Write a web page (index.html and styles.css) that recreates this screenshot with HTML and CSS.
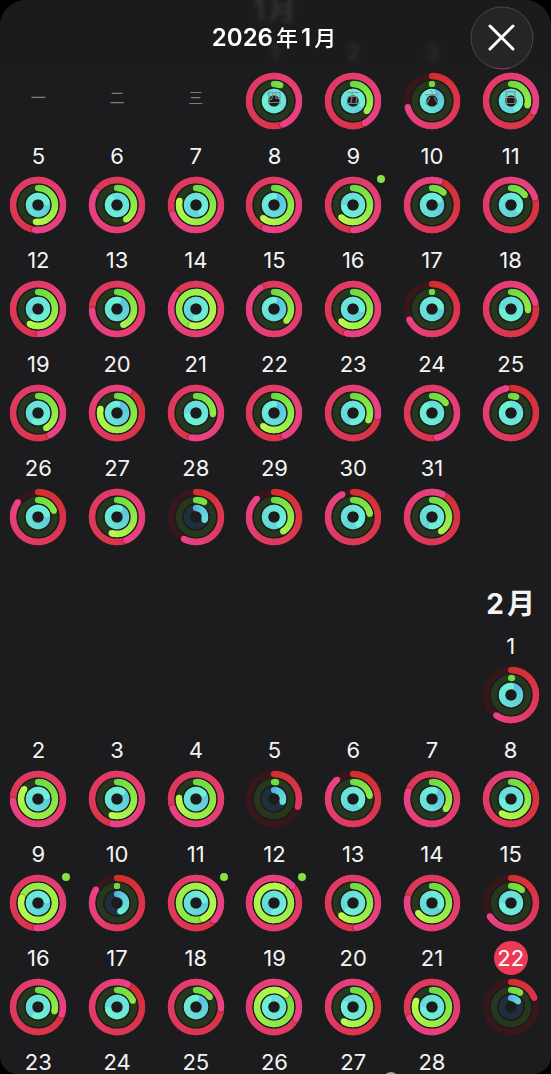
FILE: index.html
```html
<!DOCTYPE html>
<html lang="zh-CN">
<head>
  <meta charset="UTF-8">
  <meta name="viewport" content="width=device-width, initial-scale=1">
  <title>2026年1月</title>
  <link rel="stylesheet" href="styles.css">
</head>
<body>

<div class="screen">
  <main class="calendar">
    <section class="month">
      <h2 class="month-name first-thu"><span>1</span><span>月</span></h2>
      <ol class="days" id="january"></ol>
    </section>
    <section class="month">
      <h2 class="month-name first-sun"><span>2</span><span>月</span></h2>
      <ol class="days" id="february"></ol>
    </section>
  </main>

  <header class="topbar">
    <h1>2026<span class="cjk">年</span>1<span class="cjk">月</span></h1>
    <button class="close" type="button" aria-label="关闭">
      <svg viewBox="0 0 64 64" fill="none" stroke-linecap="round">
        <circle cx="32" cy="32" r="31" fill="#252528" stroke="#48484b"/>
        <path d="M25 62a31 31 0 0 0 15 0" stroke="#8f3652"/>
        <path d="M20 20l23 23M43 20l-23 23" stroke="#fff" stroke-width="3"/>
      </svg>
    </button>
  </header>

  <div class="weekdays">
    <span>一</span><span>二</span><span>三</span><span>四</span><span>五</span><span>六</span><span>日</span>
  </div>

  <div class="nub"></div>
</div>

<script src="script.js"></script>
</body>
</html>
```
FILE: styles.css
```css
* {
  box-sizing: border-box;
}
body {
  margin: 0;
  background-color: #000;
  color: #f4f4f5;
  font-family: Inter, "Noto Sans CJK SC", sans-serif;
}
.screen {
  position: relative;
  height: 100vh;
  overflow: hidden;
  background-color: #1c1c1e;
  border-radius: 26px 26px 18px 18px;
}
.calendar {
  margin: -14px 0 0 -1px;
  padding-right: 1px;
}
.month {
  padding-bottom: 24px;
}
.days,
.weekdays {
  display: grid;
  grid-template-columns: repeat(7, 1fr);
  margin: 0;
  padding: 0;
  text-align: center;
}
.month-name {
  display: flex;
  justify-content: center;
  gap: 3px;
  height: 50px;
  width: calc(100% / 7);
  margin: 0;
  font-size: 28px;
  line-height: 48px;
  font-weight: 700;
}
.first-thu {
  margin-left: calc(300% / 7);
}
.first-sun {
  margin-left: calc(600% / 7);
}
.days {
  list-style: none;
}
.day {
  display: flex;
  flex-direction: column;
  align-items: center;
  gap: 5px;
  height: 104px;
}
.number {
  min-width: 34px;
  height: 32px;
  font-size: 22px;
  line-height: 32px;
  text-align: center;
}
.today .number {
  height: 34px;
  margin: -1px 0;
  line-height: 34px;
  border-radius: 50%;
  background-color: #ec3a56;
  color: #fff;
}
.rings {
  position: relative;
  width: 56px;
  height: 56px;
}
.rings svg {
  display: block;
}
.workout {
  position: absolute;
  top: -2px;
  right: -4px;
  width: 8px;
  height: 8px;
  border-radius: 50%;
  background-color: #8be045;
}

.topbar {
  position: absolute;
  top: 0;
  left: 0;
  right: 0;
  height: 70px;
  background-color: rgba(28, 28, 30, 0.9);
  backdrop-filter: blur(2px);
}
.topbar h1 {
  margin: 0;
  font-size: 24px;
  line-height: 76px;
  font-weight: 600;
  text-align: center;
  color: #fff;
}
.cjk {
  font-size: 22px;
  font-weight: 500;
  margin: 0 3px;
}
.close {
  position: absolute;
  top: 6px;
  right: 17px;
  width: 64px;
  height: 64px;
  padding: 0;
  border: none;
  background: none;
  cursor: pointer;
}
.close svg {
  display: block;
}
.weekdays {
  position: absolute;
  top: 86px;
  left: -1px;
  right: 1px;
  font-size: 15px;
  line-height: 24px;
  color: rgba(138, 138, 140, 0.9);
}
.nub {
  position: absolute;
  bottom: -14px;
  left: 71%;
  width: 16px;
  height: 16px;
  margin-left: -8px;
  border-radius: 50%;
  background-color: #a0a0a2;
}
```
FILE: script.js
```js
// [move, exercise, stand] as a share of the goal, above 1 = second lap
const january = [
  [1.44, 0.06, 1.8], [1.42, 0.35, 1.3], [0.71, 0, 1], [1.32, 0.29, 1.4],
  [1.52, 0.52, 1.2], [1.84, 0.41, 1.88], [1.69, 0.79, 1.4], [1.56, 0.61, 1],
  [1.5, 0.62, 1.7], [1.05, 0.12, 1.15], [1.2, 0.15, 1.33],
  [1.49, 0.58, 1.58], [1.74, 0.44, 1.02], [1.85, 1.54, 1.5], [1.91, 0.37, 1],
  [1.54, 0.62, 1.25], [0.68, 0, 1.2], [1.21, 0.26, 1.7],
  [1.42, 0.42, 1.55], [1.08, 0.79, 1], [1.53, 0.26, 1.7], [1.43, 0.61, 1],
  [1.27, 0.32, 1.5], [1.47, 0.15, 1.9], [0.97, 0.05, 1.95],
  [0.85, 0.19, 1.2], [1.44, 0.55, 1.05], [0.58, 0.08, 0.3], [0.88, 0.41, 1.4],
  [0.93, 0.22, 1.4], [1.07, 0.41, 1.5]
];
const february = [
  [0.6, 0.01, 1],
  [1.74, 0.85, 1.2], [1.53, 0.55, 1.1], [1.69, 0.76, 1.15], [0.3, 0.02, 0.3],
  [0.89, 0.22, 1.35], [1.8, 0.35, 1.05], [1.12, 0.59, 1.7],
  [1.51, 1.8, 1.2], [0.84, 0, 0.44], [1.37, 1.43, 1.2], [2.13, 2.09, 1.5],
  [1.48, 0.62, 1.6], [1.78, 0.65, 1.3], [0.66, 0.11, 1.7],
  [1.3, 0.29, 1.55], [1.07, 0.19, 1.7], [1.26, 0.15, 1], [2.33, 1.12, 1.9],
  [1.13, 0.59, 1.8], [1.68, 0.81, 1.7], [0.19, 0.09, 0.14],
  null, null, null, null, null, null
];

const styles = [
  { r: 25, track: '#36171c', from: [211, 46, 46], to: [233, 66, 134], ease: 1, shadow: 0.25 },
  { r: 17, track: '#26371e', from: [112, 219, 66], to: [184, 251, 76], ease: 1, shadow: 0.2 },
  { r: 9, track: '#1f303d', from: [84, 182, 222], to: [112, 240, 214], ease: 0.6, shadow: 0 }
];
const STEP = 1 / 60;

function point(r, t) {
  const a = t * 2 * Math.PI;
  return [28 + r * Math.sin(a), 28 - r * Math.cos(a)];
}

// short arcs stop before they reach the end colour
function colorAt(style, t, value) {
  const k = Math.pow(t / Math.max(value, 0.55), style.ease);
  const c = style.from.map((v, i) => Math.round(v + (style.to[i] - v) * k));
  return `rgb(${c.join(',')})`;
}

function dot(style, t, color) {
  const [x, y] = point(style.r, t);
  return `<circle cx="${x}" cy="${y}" r="3.1" fill="${color}"/>`;
}

function ring(style, value) {
  let out = `<circle cx="28" cy="28" r="${style.r}" fill="none" stroke="${style.track}" stroke-width="6.3"/>`;
  const start = Math.max(0, value - 1);
  if (value <= 1) out += dot(style, 0, colorAt(style, 0, value));
  for (let t = start; t < value; t += STEP) {
    // each piece runs under the next one so that no seam is left
    const end = Math.min(t + STEP * 2, value);
    const [x1, y1] = point(style.r, t);
    const [x2, y2] = point(style.r, end);
    out += `<path d="M${x1} ${y1}A${style.r} ${style.r} 0 0 1 ${x2} ${y2}" fill="none" stroke="${colorAt(style, t, value)}" stroke-width="6.3"/>`;
  }
  // soft shadow ahead of the tip where it runs over the previous lap
  if (value > 0.95) out += dot(style, value + 0.2 / style.r, `rgba(40,0,20,${style.shadow})`);
  out += dot(style, value, colorAt(style, value, value));
  return out;
}

function fill(id, data, firstColumn, workouts, today) {
  const list = document.getElementById(id);
  data.forEach((values, i) => {
    const li = document.createElement('li');
    li.className = i + 1 === today ? 'day today' : 'day';
    if (i === 0) li.style.gridColumnStart = firstColumn;
    li.innerHTML = `<span class="number">${i + 1}</span>`;
    if (values) {
      const circles = values.map((v, n) => ring(styles[n], v)).join('');
      const mark = workouts.includes(i + 1) ? '<i class="workout"></i>' : '';
      li.innerHTML += `<div class="rings"><svg width="56" height="56" viewBox="0 0 56 56" overflow="visible">${circles}</svg>${mark}</div>`;
    }
    list.appendChild(li);
  });
}

fill('january', january, 4, [9], 0);
fill('february', february, 7, [9, 11, 12], 22);
```
